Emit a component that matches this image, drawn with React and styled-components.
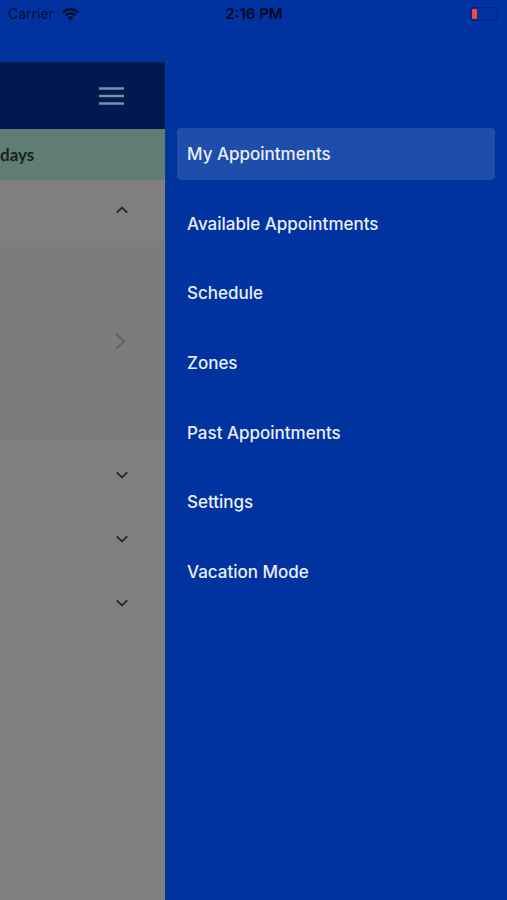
import React from "react";
import styled, { createGlobalStyle } from "styled-components";

const GlobalStyle = createGlobalStyle`
  * {
    box-sizing: border-box;
  }

  body {
    margin: 0;
    background: #0033a0;
    font-family: Inter, "Liberation Sans", sans-serif;
  }

  button {
    border: none;
    background: none;
    padding: 0;
    font: inherit;
    cursor: pointer;
  }

  svg {
    display: block;
  }
`;

const Wrapper = styled.div`
  min-height: 100vh;
  display: flex;
  flex-direction: column;
  background: #0033a0;
`;

const StatusBar = styled.header`
  height: 62px;
  padding: 4px 7px 0 8px;
  display: grid;
  grid-template-columns: 1fr auto 1fr;
  align-items: start;
  font-size: 14px;
  line-height: 20px;
  color: #000d33;
`;

const Carrier = styled.div`
  display: flex;
  align-items: center;
  gap: 8px;
`;

const Time = styled.time`
  font-size: 15px;
  font-weight: 600;
  color: #000820;
`;

const Battery = styled.div`
  display: flex;
  justify-content: flex-end;
  padding-top: 3px;
`;

const Content = styled.div`
  flex: 1;
  display: grid;
  grid-template-columns: 165px 1fr;
`;

const Page = styled.main`
  overflow: hidden;
  background: #808080;
`;

const TopBar = styled.div`
  height: 67px;
  padding-right: 41px;
  display: flex;
  align-items: center;
  justify-content: flex-end;
  background: #00194f;
`;

const Banner = styled.div`
  height: 51px;
  display: flex;
  align-items: center;
  background: #607d73;
  color: #152421;
  font-family: Lato, sans-serif;
  font-size: 17px;
  font-weight: 700;
`;

const Section = styled.button`
  width: 100%;
  height: ${({ $open }) => ($open ? "61px" : "64px")};
  padding-right: 37px;
  display: flex;
  align-items: center;
  justify-content: flex-end;
  border-bottom: 1px solid ${({ $open }) => ($open ? "#7e7f7f" : "#7c7d7d")};
`;

const Panel = styled.button`
  width: 100%;
  height: 200px;
  padding-right: 39px;
  display: flex;
  align-items: center;
  justify-content: flex-end;
  background: #7a7c7e;
`;

const Sections = styled.div`
  padding-top: 2px;
`;

const Drawer = styled.nav`
  padding: 66px 12px 24px 11px;
  border-left: 1px solid #0b3a94;
`;

const Menu = styled.ul`
  min-height: 470px;
  margin: 0;
  padding: 0;
  list-style: none;
  display: flex;
  flex-direction: column;
  justify-content: space-between;
`;

const MenuLink = styled.a`
  height: 52px;
  padding: 0 10px;
  display: flex;
  align-items: center;
  border-radius: 4px;
  background: ${({ $active }) => ($active ? "#1f4dac" : "transparent")};
  color: #e9effb;
  font-size: 17px;
  font-weight: 500;
  text-decoration: none;
`;

const WifiIcon = () => (
  <svg width="17" height="13" viewBox="0 0 17 13" fill="none" aria-hidden="true">
    <path d="M1 4.4a10.8 10.8 0 0 1 15 0" stroke="currentColor" strokeWidth="2.5" />
    <path d="M3.6 7.3a7 7 0 0 1 9.8 0" stroke="currentColor" strokeWidth="2.3" />
    <path d="M8.5 12.4 5.7 9.6a4 4 0 0 1 5.6 0z" fill="currentColor" />
  </svg>
);

const BatteryIcon = () => (
  <svg width="30" height="14" viewBox="0 0 30 14" role="img" aria-label="Battery low">
    <rect x="0.7" y="0.7" width="26.6" height="12.6" rx="3.6" fill="none" stroke="#00227c" strokeWidth="1.3" />
    <rect x="2" y="2" width="5" height="10" rx="1.2" fill="#f5473c" />
    <path d="M28.4 4.8c1.6.7 1.6 3.7 0 4.4z" fill="#00227c" />
  </svg>
);

const MenuIcon = () => (
  <svg width="25" height="20" viewBox="0 0 25 20" aria-hidden="true">
    <path d="M0 2.5h25M0 10h25M0 17.5h25" stroke="#808ba6" strokeWidth="2.5" />
  </svg>
);

const Chevron = ({ up }) => (
  <svg width="12" height="8" viewBox="0 0 12 8" fill="none" aria-hidden="true">
    <path
      d={up ? "M.8 6.7 6 1.5l5.2 5.2" : "M.8 1.3 6 6.5l5.2-5.2"}
      stroke="#262829"
      strokeWidth="1.9"
    />
  </svg>
);

const ArrowRight = () => (
  <svg width="11" height="17" viewBox="0 0 11 17" fill="none" aria-hidden="true">
    <path d="M1.3 1.2 9 8.5l-7.7 7.3" stroke="#606263" strokeWidth="2.1" />
  </svg>
);

const links = [
  "My Appointments",
  "Available Appointments",
  "Schedule",
  "Zones",
  "Past Appointments",
  "Settings",
  "Vacation Mode",
];

const App = () => {
  return (
    <>
      <GlobalStyle />
      <Wrapper>
        <StatusBar>
          <Carrier>
            Carrier
            <WifiIcon />
          </Carrier>
          <Time>2:16 PM</Time>
          <Battery>
            <BatteryIcon />
          </Battery>
        </StatusBar>
        <Content>
          <Page>
            <TopBar>
              <button type="button" aria-label="Close menu">
                <MenuIcon />
              </button>
            </TopBar>
            <Banner>days</Banner>
            <Section type="button" $open aria-expanded="true" aria-label="Collapse section">
              <Chevron up />
            </Section>
            <Panel type="button" aria-label="Appointment details">
              <ArrowRight />
            </Panel>
            <Sections>
              {[1, 2, 3].map((id) => (
                <Section key={id} type="button" aria-expanded="false" aria-label="Expand section">
                  <Chevron />
                </Section>
              ))}
            </Sections>
          </Page>
          <Drawer>
            <Menu>
              {links.map((label, i) => (
                <li key={label}>
                  <MenuLink href="#" $active={i === 0}>
                    {label}
                  </MenuLink>
                </li>
              ))}
            </Menu>
          </Drawer>
        </Content>
      </Wrapper>
    </>
  );
};

export default App;
